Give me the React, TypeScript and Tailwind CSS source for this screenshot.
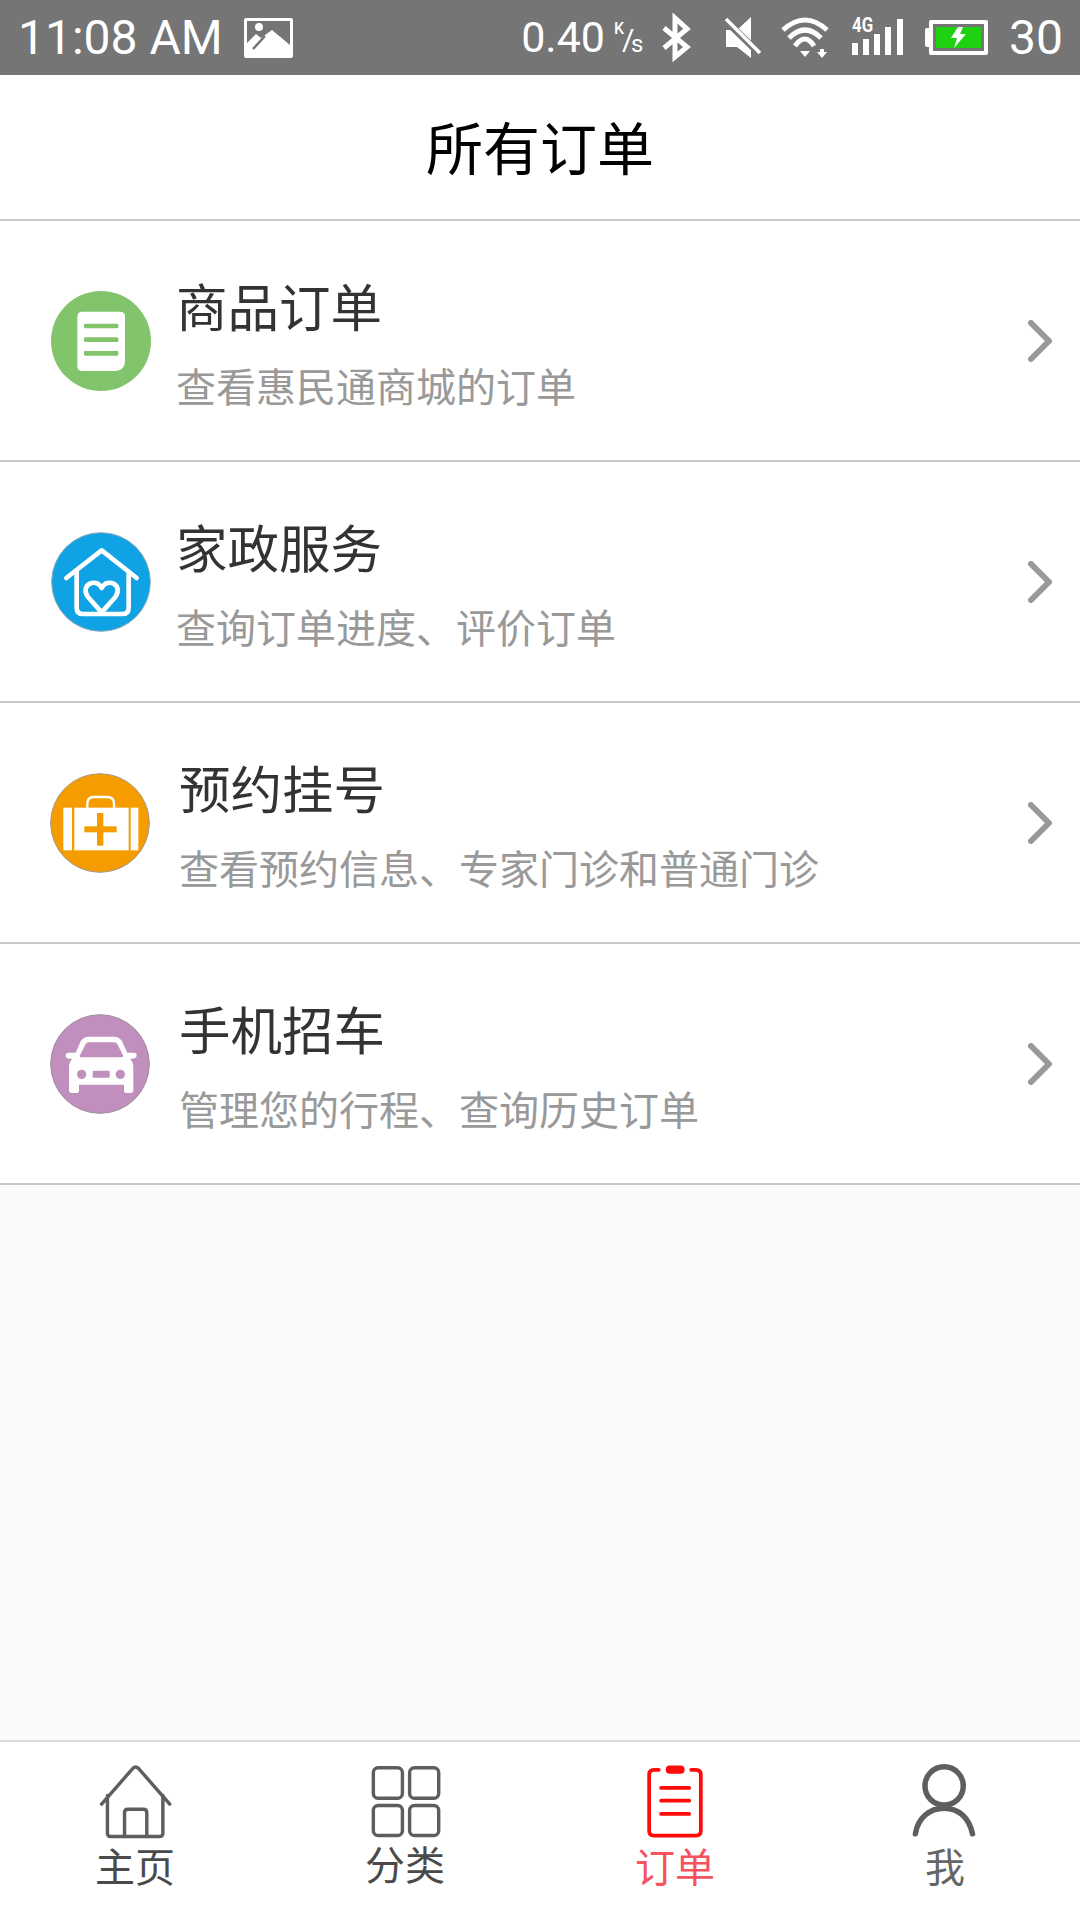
const cjk = "font-['Noto_Sans_CJK_SC',sans-serif]";

function CircleIcon({ children, box, className }: { children: React.ReactNode; box: string; className: string }) {
  return (
    <svg viewBox={box} className={`block h-[100px] w-[100px] shrink-0 ${className}`}>
      {children}
    </svg>
  );
}

const rows = [
  { title: "商品订单", sub: "查看惠民通商城的订单", kind: "doc" },
  { title: "家政服务", sub: "查询订单进度、评价订单", kind: "house" },
  { title: "预约挂号", sub: "查看预约信息、专家门诊和普通门诊", kind: "case" },
  { title: "手机招车", sub: "管理您的行程、查询历史订单", kind: "car" },
];

function RowIcon({ kind }: { kind: string }) {
  if (kind === "doc") {
    return (
      <CircleIcon box="63 62 300 300" className="ml-[51px]">
        <circle cx="213" cy="212" r="150" fill="#82c46c" />
        <path d="M157 124H270Q285 124 285 139V270Q285 302 253 302H157Q142 302 142 287V139Q142 124 157 124Z" fill="#fff" />
        <rect x="162" y="160" width="103" height="14" rx="4" fill="#82c46c" />
        <rect x="162" y="201" width="103" height="14" rx="4" fill="#82c46c" />
        <rect x="162" y="242" width="103" height="14" rx="4" fill="#82c46c" />
      </CircleIcon>
    );
  }
  if (kind === "house") {
    return (
      <CircleIcon box="63 65 300 300" className="ml-[51px]">
        <circle cx="213" cy="215" r="148" fill="#0fa3e6" stroke="#8fa9b5" strokeWidth="3" />
        <g fill="none" stroke="#fff" strokeWidth="14" strokeLinecap="round" strokeLinejoin="round">
          <path d="M109 203L215 120L320 203" />
          <path d="M140 185V292Q140 311 159 311H277Q296 311 296 292V185" />
          <path d="M215 306L174 260C148 224 198 200 215 233C232 200 282 224 256 260Z" />
        </g>
      </CircleIcon>
    );
  }
  if (kind === "case") {
    return (
      <CircleIcon box="60 68 300 300" className="ml-[50px]">
        <circle cx="210" cy="218" r="148" fill="#f59c00" stroke="#a39a8c" strokeWidth="3" />
        <path d="M172 172V160Q172 140 192 140H232Q252 140 252 160V172" fill="none" stroke="#fff" strokeWidth="7" />
        <rect x="100" y="172" width="26" height="128" fill="#fff" />
        <rect x="133" y="172" width="163" height="128" fill="#fff" />
        <rect x="302" y="172" width="23" height="128" fill="#fff" />
        <rect x="163" y="228" width="97" height="18" fill="#f59c00" />
        <rect x="201" y="188" width="19" height="98" fill="#f59c00" />
      </CircleIcon>
    );
  }
  return (
    <CircleIcon box="58 56 300 300" className="ml-[50px]">
      <circle cx="208" cy="206" r="148" fill="#c18fbd" stroke="#9a8f99" strokeWidth="3" />
      <path
        d="M135 172L150 138Q157 124 175 124H250Q267 124 274 138L290 172H310Q318 172 318 180Q318 190 306 190H298Q308 200 308 215V285Q308 293 300 293H288Q280 293 280 285V268H145V285Q145 293 137 293H123Q115 293 115 285V215Q115 200 125 190H115Q105 190 105 180Q105 172 113 172Z"
        fill="#fff"
      />
      <path d="M165 146Q168 141 175 141H250Q257 141 260 146L277 180Q279 186 272 186H153Q146 186 148 180Z" fill="#c18fbd" />
      <circle cx="153" cy="237" r="14" fill="#c18fbd" />
      <circle cx="269" cy="237" r="14" fill="#c18fbd" />
      <rect x="186" y="226" width="51" height="21" rx="3" fill="#c18fbd" />
    </CircleIcon>
  );
}

function StatusBar() {
  return (
    <div className="flex h-[75px] items-center bg-[#757575] text-white font-['Roboto',sans-serif]">
      <span className="ml-[18px] text-[48px] leading-none">11:08 AM</span>
      {/* picture notification */}
      <svg viewBox="245 19 49 40" className="ml-[21px] h-[40px] w-[49px]">
        <rect x="245" y="19" width="49" height="40" rx="2" fill="#fff" />
        <rect x="248" y="22" width="43" height="32" fill="#757575" />
        <circle cx="260" cy="28" r="4" fill="#fff" />
        <path d="M248 44L257 35L262 39L273 31L291 46V55H248Z" fill="#fff" />
        <path d="M254 50L266 37" stroke="#757575" strokeWidth="2.5" />
      </svg>
      <span className="ml-auto text-[43px] leading-none">0.40</span>
      <span className="relative ml-[7px] h-[44px] w-[32px] leading-none">
        <span className="absolute left-[2px] top-[5px] text-[16px] font-medium">K</span>
        <span className="absolute left-[10px] top-[9px] text-[30px]">/</span>
        <span className="absolute left-[19px] top-[16px] text-[24px]">s</span>
      </span>
      <svg viewBox="660 13 32 50" className="ml-[16px] h-[50px] w-[32px]">
        <path d="M664 28L687 47L675 57V18L687 29L664 48" fill="none" stroke="#fff" strokeWidth="5" />
      </svg>
      <svg viewBox="722 14 40 48" className="ml-[30px] h-[48px] w-[40px]">
        <path d="M726 30H737L751 17V58L737 47H726Z" fill="#fff" />
        <path d="M725 20L760 54" stroke="#757575" strokeWidth="7" />
        <path d="M726 19L760 53" stroke="#fff" strokeWidth="3.5" />
      </svg>
      <svg viewBox="780 14 50 44" className="ml-[18px] h-[44px] w-[50px]">
        <g fill="none" stroke="#fff" strokeWidth="5">
          <path d="M783 28Q805 8 827 28" />
          <path d="M789 36Q805 20 821 36" />
          <path d="M795 44Q805 30 814 44" />
        </g>
        <path d="M800 49H810L805 55Z" fill="#fff" />
        <path d="M820 47H824V50H827L822 56L817 50H820Z" fill="#fff" />
      </svg>
      <span className="relative ml-[22px] mt-[17px] h-[38px] w-[51px] self-start">
        <span className="absolute left-0 top-[-2px] origin-left scale-x-[0.8] text-[21px] font-bold leading-none">4G</span>
        <span className="absolute bottom-0 left-0 h-[12px] w-[6px] bg-white" />
        <span className="absolute bottom-0 left-[11px] h-[16px] w-[6px] bg-white" />
        <span className="absolute bottom-0 left-[22px] h-[21px] w-[6px] bg-white" />
        <span className="absolute bottom-0 left-[33px] h-[28px] w-[6px] bg-white" />
        <span className="absolute bottom-0 right-0 h-[36px] w-[6px] bg-white" />
      </span>
      <span className="ml-[22px] flex items-center">
        <span className="h-[19px] w-[4px] rounded-l-[2px] bg-white" />
        <span className="flex h-[35px] w-[59px] items-center justify-center rounded-[2px] border-[4px] border-white bg-[#757575] p-[3px]">
          <svg viewBox="0 0 45 21" className="block h-full w-full bg-[#1fd211]">
            <path d="M22 0H27L24 7H30L18 21L21 11H15Z" fill="#fff" />
          </svg>
        </span>
      </span>
      <span className="ml-[21px] mr-[17px] text-[48px] leading-none">30</span>
    </div>
  );
}

const tabs = [
  { label: "主页", color: "text-[#4a4a4a]", mt: "mt-[3px]", box: "279.5 100 225 225" },
  { label: "分类", color: "text-[#4a4a4a]", mt: "mt-[1px]", box: "1062.5 100 225 225" },
  { label: "订单", color: "text-[#f4535f]", mt: "mt-[3px]", box: "279.5 100 225 225" },
  { label: "我", color: "text-[#666666]", mt: "mt-[3px]", box: "1063.5 100 225 225" },
];

function TabIcon({ label, box }: { label: string; box: string }) {
  return (
    <svg viewBox={box} className="block h-[77px] w-[77px]" fill="none" strokeLinecap="round" strokeLinejoin="round">
      {label === "主页" && (
        <g stroke="#5e5e5e" strokeWidth="10">
          <path d="M293 220L385 115Q392 108 400 115L492 220" />
          <path d="M310 195V305Q310 315 320 315H462Q472 315 472 305V195" />
          <path d="M360 315V245Q360 235 370 235H415Q425 235 425 245V315" />
        </g>
      )}
      {label === "分类" && (
        <g stroke="#5e5e5e" strokeWidth="10">
          <rect x="1081" y="114" width="85" height="89" rx="14" />
          <rect x="1187" y="114" width="85" height="89" rx="14" />
          <rect x="1081" y="224" width="85" height="88" rx="14" />
          <rect x="1187" y="224" width="85" height="88" rx="14" />
        </g>
      )}
      {label === "订单" && (
        <g stroke="#ff0a0a" strokeWidth="11">
          <path d="M343 120H329Q315 120 315 134V298Q315 312 329 312H452Q466 312 466 298V134Q466 120 452 120H438" />
          <path d="M350 173H432M350 210H432M350 249H432" />
          <rect x="369" y="113" width="44" height="13" rx="6" fill="#ff0a0a" />
        </g>
      )}
      {label === "我" && (
        <g stroke="#5e5e5e" strokeWidth="16">
          <circle cx="1172" cy="167" r="56" />
          <path d="M1088 307C1095 260 1130 232 1172 232C1215 232 1245 260 1255 307" />
        </g>
      )}
    </svg>
  );
}

export default function App() {
  return (
    <div className={`flex h-[1920px] w-[1080px] flex-col bg-[#fafafa] ${cjk}`}>
      <StatusBar />
      <div className="flex h-[146px] items-center justify-center border-b-2 border-[#c8c8c8] bg-white pb-[4px] text-[57px] leading-none text-black">
        所有订单
      </div>
      {rows.map((row, i) => (
        <div key={row.title} className="flex h-[241px] items-center border-b-2 border-[#c8c8c8] bg-white">
          <RowIcon kind={row.kind} />
          <div className={`mt-[3px] flex flex-col ${i < 2 ? "ml-[25px]" : "ml-[29px]"}`}>
            <span className="text-[51.5px] leading-[60px] text-[#333333]">{row.title}</span>
            <span className="mt-[26px] text-[40px] leading-[48px] text-[#999999]">{row.sub}</span>
          </div>
          <svg viewBox="0 0 24 42" className="ml-auto mr-[28px] h-[42px] w-[24px]" fill="none">
            <path d="M3 3L21 21L3 39" stroke="#999999" strokeWidth="6" strokeLinecap="round" strokeLinejoin="round" />
          </svg>
        </div>
      ))}
      <div className="flex-1" />
      <div className="grid h-[180px] grid-cols-4 border-t-2 border-[#dcdcdc] bg-white">
        {tabs.map((tab) => (
          <div key={tab.label} className="flex flex-col items-center pt-[21px]">
            <TabIcon label={tab.label} box={tab.box} />
            <span className={`text-[40px] leading-[44px] ${tab.mt} ${tab.color}`}>{tab.label}</span>
          </div>
        ))}
      </div>
    </div>
  );
}
